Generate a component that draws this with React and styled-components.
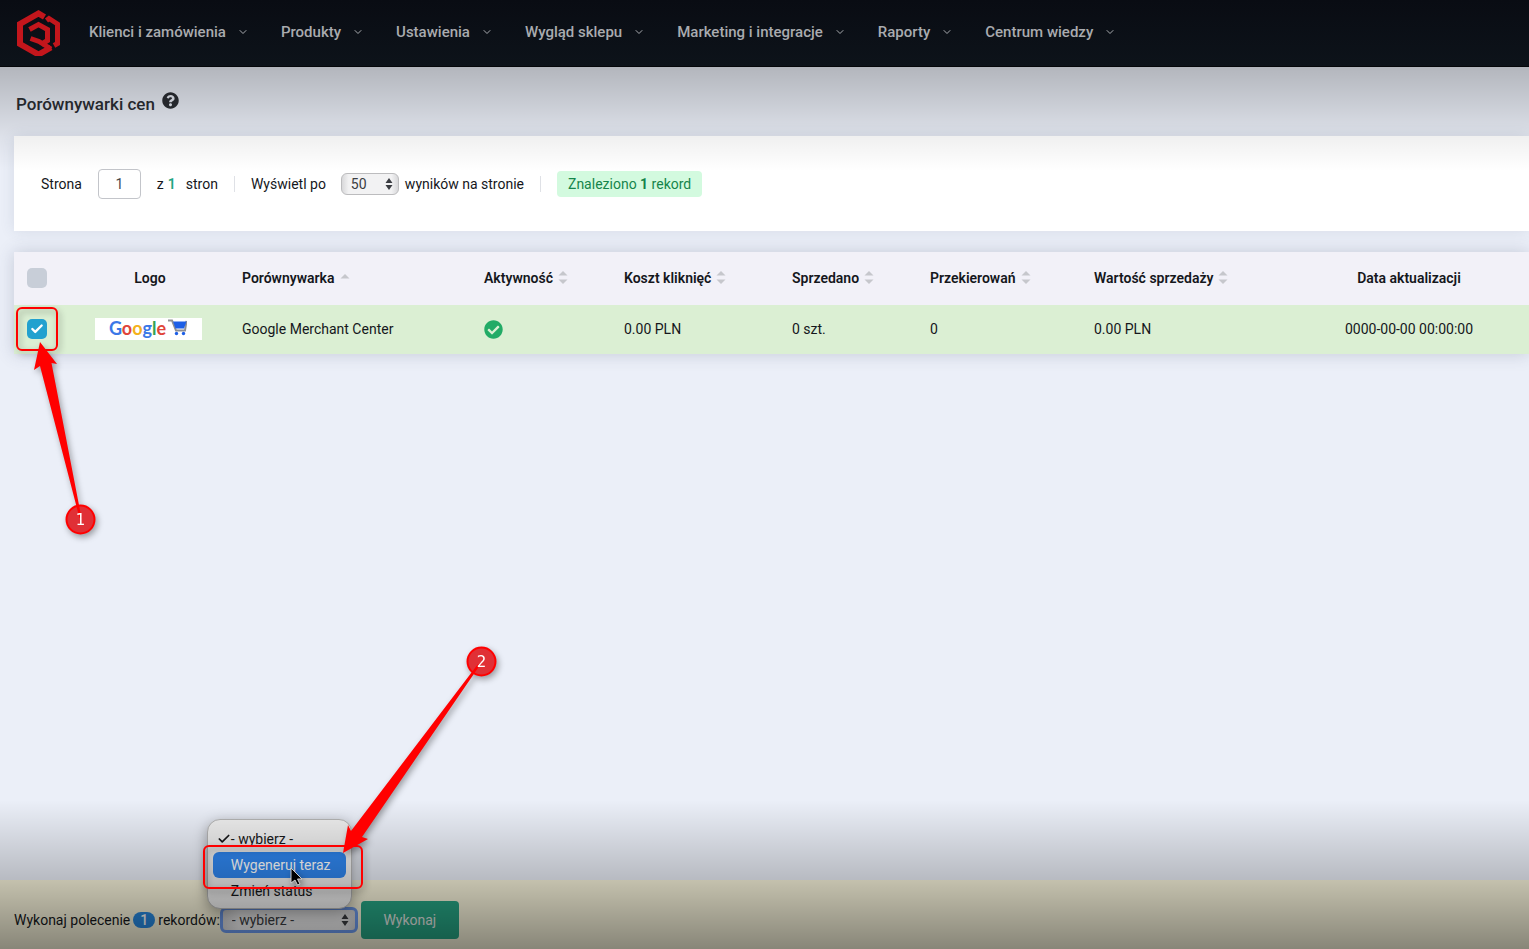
import React from "react";
import styled, { createGlobalStyle } from "styled-components";
import { FaCheckCircle, FaQuestionCircle } from "react-icons/fa";
import { Check, ChevronDown } from "lucide-react";

const GlobalStyle = createGlobalStyle`
  * {
    box-sizing: border-box;
  }
  body {
    margin: 0;
    background: #ebeff8;
    color: #15171c;
    font-family: Roboto, "Liberation Sans", sans-serif;
    font-size: 14px;
    line-height: 20px;
  }
`;

const Page = styled.div`
  position: relative;
  display: flex;
  flex-direction: column;
  min-height: 100vh;
  overflow: hidden;
`;

//* darkens the top and the bottom of the page
const Shade = styled.div`
  position: absolute;
  inset: 67px 0 0;
  z-index: 5;
  pointer-events: none;
  background:
    linear-gradient(rgba(0, 0, 0, 0.24), rgba(0, 0, 0, 0.06) 70px, rgba(0, 0, 0, 0) 104px) top / 100% 104px no-repeat,
    linear-gradient(rgba(0, 0, 0, 0), rgba(0, 0, 0, 0.22) 80px, rgba(0, 0, 0, 0.46)) bottom / 100% 149px no-repeat;
`;

const Header = styled.header`
  display: flex;
  align-items: center;
  gap: 28px;
  height: 67px;
  padding: 0 16px 2px;
  background: linear-gradient(#090c13, #0d131a);
  border-bottom: 1px solid #05070a;
`;

const Nav = styled.nav`
  display: flex;
  gap: 32px;
`;

const NavLink = styled.a`
  display: flex;
  align-items: center;
  gap: 11px;
  color: #a9abaf;
  font-size: 15px;
  font-weight: 500;
  text-decoration: none;
  white-space: nowrap;
`;

const Main = styled.main`
  flex: 1;
  padding-left: 14px;
`;

const Title = styled.h1`
  display: flex;
  gap: 7px;
  margin: 0;
  padding: 25px 2px 20px;
  color: #2b2e34;
  font-size: 17px;
  font-weight: 500;
  line-height: 24px;
`;

const Pager = styled.form`
  display: flex;
  align-items: center;
  height: 95px;
  margin-bottom: 21px;
  padding: 0 27px;
  background: #fff;
  box-shadow: 0 0 14px rgba(60, 70, 100, 0.12);
`;

const PageInput = styled.input`
  width: 43px;
  height: 30px;
  margin: 0 16px;
  padding: 0;
  border: 1px solid #c3c5ca;
  border-radius: 4px;
  color: #44474d;
  font: inherit;
  text-align: center;
`;

const PageTotal = styled.b`
  margin: 0 10px 0 4px;
  color: #22a583;
  font-weight: 600;
`;

const Divider = styled.span`
  width: 1px;
  height: 16px;
  margin: 0 16px;
  background: #dfe1e6;
`;

const SelectWrap = styled.span`
  position: relative;
  display: inline-flex;
  align-items: center;
  svg.arrows {
    position: absolute;
    right: ${(p) => (p.$focus ? 9 : 6)}px;
    pointer-events: none;
  }
`;

const LimitWrap = styled(SelectWrap)`
  margin: 0 6px 0 15px;
`;

const Select = styled.select`
  appearance: none;
  height: ${(p) => (p.$focus ? "26px" : "22px")};
  width: ${(p) => (p.$focus ? "138px" : "58px")};
  padding: 0 9px;
  border: ${(p) => (p.$focus ? "3px solid #6f9cf0" : "1px solid #bcbcbe")};
  border-radius: 6px;
  background: linear-gradient(90deg, #d8d8da, #f2f2f3 12%, #f2f2f3 88%, #d8d8da);
  color: #3b3d42;
  font: inherit;
  outline: none;
`;

const Found = styled.span`
  padding: 3px 11px;
  border-radius: 4px;
  background: #d3fadf;
  color: #15854b;
`;

const Table = styled.table`
  width: 100%;
  table-layout: fixed;
  border-collapse: collapse;
  box-shadow: 0 0 16px rgba(60, 70, 100, 0.22);
`;

const Col = styled.col`
  width: ${(p) => p.$width}px;
`;

const HeadRow = styled.tr`
  height: 53px;
  background: #f2f1f8;
`;

const BodyRow = styled.tr`
  height: 49px;
  background: #dbefd3;
`;

const Cell = styled.td`
  padding: 0 0 2px ${(p) => (p.$center ? 0 : 13)}px;
  font-weight: 400;
  text-align: ${(p) => (p.$center ? "center" : "left")};
  vertical-align: middle;
  white-space: nowrap;
  svg {
    vertical-align: middle;
  }
`;

const HeadCell = styled(Cell)`
  font-weight: 600;
`;

const SortButton = styled.button`
  display: inline-flex;
  align-items: center;
  gap: 5px;
  padding: 0;
  border: 0;
  background: none;
  color: inherit;
  font: inherit;
`;

const CheckWrap = styled.label`
  position: relative;
  display: flex;
  width: 20px;
  height: 20px;
  > svg.tick {
    position: absolute;
    inset: 3px;
    color: #fff;
    pointer-events: none;
  }
`;

const Checkbox = styled.input`
  appearance: none;
  width: 20px;
  height: 20px;
  margin: 0;
  border-radius: 5px;
  background: #c8ced8;
  &:checked {
    background: #22a1cf;
  }
`;

const Brand = styled.span`
  display: inline-flex;
  align-items: center;
  justify-content: center;
  gap: 2px;
  width: 107px;
  height: 22px;
  margin-right: 4px;
  padding-bottom: 2px;
  background: #fff;
  font-family: Lato, sans-serif;
  font-size: 18px;
  font-weight: 700;
  vertical-align: middle;
`;

const Letter = styled.span`
  color: ${(p) => p.$color};
`;

const Footer = styled.footer`
  display: flex;
  align-items: center;
  height: 69px;
  padding: 10px 14px 0;
  background: #fbf7de;
`;

const CommandLabel = styled.label`
  display: flex;
  align-items: center;
  gap: 3px;
  white-space: nowrap;
`;

const Count = styled.span`
  width: 22px;
  border-radius: 8px;
  background: #2889e0;
  color: #fff;
  font-weight: 500;
  line-height: 16px;
  text-align: center;
`;

const Submit = styled.button`
  width: 98px;
  height: 38px;
  margin-left: 3px;
  border: 0;
  border-radius: 4px;
  background: #27a685;
  color: #e9ece9;
  font: inherit;
`;

const Menu = styled.ul`
  position: absolute;
  left: -13px;
  bottom: 24px;
  z-index: 2;
  width: 145px;
  margin: 0;
  padding: 6px 5px 4px;
  border: 1px solid #b4b4b4;
  border-radius: 13px;
  background: #efefef;
  box-shadow: 0 4px 14px rgba(0, 0, 0, 0.35);
  list-style: none;
`;

const MenuItem = styled.li`
  display: flex;
  align-items: center;
  height: 26px;
  padding-left: ${(p) => (p.$checked ? 4 : 18)}px;
  border-radius: 6px;
  background: ${(p) => (p.$active ? "#2f86ef" : "none")};
  color: ${(p) => (p.$active ? "#fff" : "#17181a")};
  white-space: nowrap;
`;

const Callout = styled.svg`
  position: absolute;
  left: ${(p) => p.$left}px;
  top: ${(p) => p.$top}px;
  z-index: 10;
  overflow: visible;
  pointer-events: none;
  filter: drop-shadow(2px 3px 3px rgba(0, 0, 0, 0.35));
  text {
    fill: #fff;
    font-family: "DejaVu Sans", sans-serif;
    font-size: 15px;
    text-anchor: middle;
  }
`;

const Logo = () => (
  <svg width="45" height="48" viewBox="0 -2 45 48" fill="none" stroke="#c3161c" role="img" aria-label="Logo">
    <path d="M28.500 7L22.500 3.500L4 14V34L22.500 44.500L35 37.500" strokeWidth="6" />
    <path d="M30.500 10.500L33 8.500L41.500 14V33.500L38 35.500" strokeWidth="5" />
    <path d="M13.500 19.500L22.500 14.500L31.500 19.500V30.500L25 34.500M14.500 28.500L23 31.500L35 39" strokeWidth="5" />
  </svg>
);

const SortArrows = ({ up }) => (
  <svg width="10" height="16" viewBox="0 0 10 16" fill="#c6c7cc" aria-hidden="true">
    <path d={up ? "M5 4L9.500 8.500H0.500Z" : "M5 1L9.500 5.500H0.500Z"} />
    {!up && <path d="M5 14L9.500 9.500H0.500Z" />}
  </svg>
);

const SelectArrows = () => (
  <svg className="arrows" width="8" height="14" viewBox="0 0 8 14" fill="#3b3d42" aria-hidden="true">
    <path d="M4 1L7.500 6H0.500ZM4 13L7.500 8H0.500Z" />
  </svg>
);

const Cart = () => (
  <svg width="19" height="17" viewBox="0 0 19 17" fill="none" aria-hidden="true">
    <path d="M0 1.500H4L8 11.500H17L18.500 2" stroke="#8d8f94" strokeWidth="2" />
    <path d="M5 2.500H18.500L16 9.500H7.500Z" fill="#1d5fe6" />
    <circle cx="8.500" cy="14.500" r="1.700" fill="#1d5fe6" />
    <circle cx="15.500" cy="14.500" r="1.700" fill="#1d5fe6" />
  </svg>
);

const menuLinks = [
  "Klienci i zamówienia",
  "Produkty",
  "Ustawienia",
  "Wygląd sklepu",
  "Marketing i integracje",
  "Raporty",
  "Centrum wiedzy",
];

const widths = [57, 158, 242, 140, 168, 138, 164, 208, 240];

const sortable = [
  "Aktywność",
  "Koszt kliknięć",
  "Sprzedano",
  "Przekierowań",
  "Wartość sprzedaży",
];

const google = [
  ["G", "#3b78e7"],
  ["o", "#e0453a"],
  ["o", "#f4b21b"],
  ["g", "#3b78e7"],
  ["l", "#34a353"],
  ["e", "#e0453a"],
];

const App = () => {
  return (
    <Page>
      <GlobalStyle />
      <Header>
        <Logo />
        <Nav>
          {menuLinks.map((name) => (
            <NavLink href="#" key={name}>
              {name}
              <ChevronDown size={12} />
            </NavLink>
          ))}
        </Nav>
      </Header>
      <Main>
        <Title>
          Porównywarki cen <FaQuestionCircle size={17} />
        </Title>
        <Pager>
          <label htmlFor="page">Strona</label>
          <PageInput id="page" defaultValue="1" />
          z <PageTotal>1</PageTotal> stron
          <Divider />
          <label htmlFor="limit">Wyświetl po</label>
          <LimitWrap>
            <Select id="limit" defaultValue="50">
              <option>50</option>
            </Select>
            <SelectArrows />
          </LimitWrap>
          wyników na stronie
          <Divider />
          <Found>
            Znaleziono <b>1</b> rekord
          </Found>
        </Pager>
        <Table>
          <colgroup>
            {widths.map((width, i) => (
              <Col key={i} $width={width} />
            ))}
          </colgroup>
          <thead>
            <HeadRow>
              <HeadCell as="th">
                <CheckWrap>
                  <Checkbox type="checkbox" aria-label="Wszystkie" />
                </CheckWrap>
              </HeadCell>
              <HeadCell as="th" $center>
                Logo
              </HeadCell>
              <HeadCell as="th">
                <SortButton>
                  Porównywarka <SortArrows up />
                </SortButton>
              </HeadCell>
              {sortable.map((name) => (
                <HeadCell as="th" key={name}>
                  <SortButton>
                    {name} <SortArrows />
                  </SortButton>
                </HeadCell>
              ))}
              <HeadCell as="th" $center>
                Data aktualizacji
              </HeadCell>
            </HeadRow>
          </thead>
          <tbody>
            <BodyRow>
              <Cell>
                <CheckWrap>
                  <Checkbox type="checkbox" defaultChecked aria-label="Google Merchant Center" />
                  <Check className="tick" size={14} strokeWidth={4} />
                  <Callout $left={-11} $top={-12} width="80" height="230">
                    <rect x="1" y="1" width="40" height="42" rx="5" fill="none" stroke="#f00" strokeWidth="2" />
                    <circle cx="64.500" cy="212.500" r="14" fill="#e03036" stroke="#f00" strokeWidth="2" />
                    <path d="M24 35L41 57L35.500 56L65.500 211L63.500 211L24 59L18 63Z" fill="#f00" />
                    <text x="64.500" y="218">1</text>
                  </Callout>
                </CheckWrap>
              </Cell>
              <Cell $center>
                <Brand>
                  <span>
                    {google.map(([char, color], i) => (
                      <Letter key={i} $color={color}>
                        {char}
                      </Letter>
                    ))}
                  </span>
                  <Cart />
                </Brand>
              </Cell>
              <Cell>Google Merchant Center</Cell>
              <Cell>
                <FaCheckCircle size={19} color="#22ab66" />
              </Cell>
              <Cell>0.00 PLN</Cell>
              <Cell>0 szt.</Cell>
              <Cell>0</Cell>
              <Cell>0.00 PLN</Cell>
              <Cell $center>0000-00-00 00:00:00</Cell>
            </BodyRow>
          </tbody>
        </Table>
      </Main>
      <Footer>
        <CommandLabel htmlFor="command">
          Wykonaj polecenie <Count>1</Count> rekordów:
        </CommandLabel>
        <SelectWrap $focus>
          <Select id="command" $focus>
            <option>- wybierz -</option>
            <option>Wygeneruj teraz</option>
            <option>Zmień status</option>
          </Select>
          <SelectArrows />
          <Menu>
            <MenuItem $checked>
              <Check size={14} strokeWidth={3} />- wybierz -
            </MenuItem>
            <MenuItem $active>Wygeneruj teraz</MenuItem>
            <MenuItem>Zmień status</MenuItem>
          </Menu>
          <Callout $left={-17} $top={-260} width="300" height="250">
            <rect x="1" y="199" width="158" height="42" rx="5" fill="none" stroke="#f00" strokeWidth="2" />
            <circle cx="278.500" cy="14.500" r="14" fill="#e03036" stroke="#f00" strokeWidth="2" />
            <path d="M140 206L145 178L148 184L275 17L277 18L159 190L165 192Z" fill="#f00" />
            <path d="M88 221V236L92 233L94.500 238L97 237L94.500 232H99Z" fill="#000" stroke="#ccc" strokeWidth="1" />
            <text x="278.500" y="20">2</text>
          </Callout>
        </SelectWrap>
        <Submit type="button">Wykonaj</Submit>
      </Footer>
      <Shade />
    </Page>
  );
};
export default App;
